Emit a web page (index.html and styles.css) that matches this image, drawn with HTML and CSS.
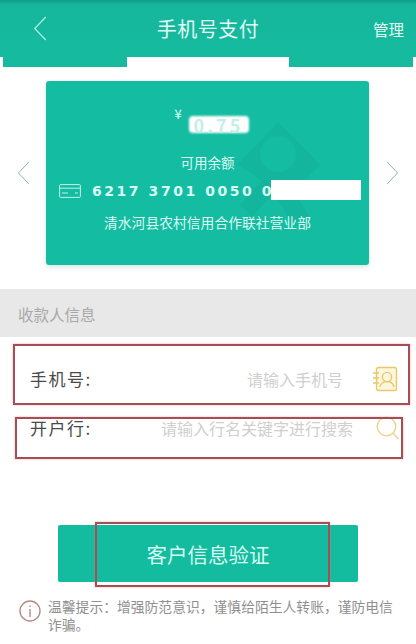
FILE: index.html
```html
<!DOCTYPE html>
<html lang="zh">
<head>
<meta charset="utf-8">
<title>手机号支付</title>
<link rel="stylesheet" href="styles.css">
</head>
<body>
<div class="page">
  <header class="header">
    <div class="bar">
      <svg class="back" viewBox="0 0 14 26"><path d="M13 1 1.5 13 13 25"/></svg>
      <h1 class="title">手机号支付</h1>
      <span class="manage">管理</span>
    </div>
    <div class="tabs"><span class="tab-side"></span><span class="tab-mid"></span><span class="tab-side"></span></div>
  </header>

  <section class="carousel">
    <svg class="arrow" viewBox="0 0 14 26"><path d="M13 1 1.5 13 13 25"/></svg>
    <div class="card">
      <svg class="watermark" viewBox="0 0 110 110"><path d="M55 0 100 45 72 73 88 100 70 108 50 75 28 100 15 88 38 62 12 45Z"/><circle class="wm-hole" cx="55" cy="34" r="19"/></svg>
      <div class="balance"><span class="yen">¥</span><span class="amount"><i class="amount-mask"></i><span class="amount-text">0.75</span></span></div>
      <div class="avail">可用余额</div>
      <div class="number">
        <svg class="card-icon" viewBox="0 0 22 14"><rect x=".6" y=".6" width="20.8" height="12.8" rx="1"/><path d="M.6 4.2h20.8M3 9h6M16 9h3"/></svg>
        <span class="digits">6217 3701 0050 0</span>
        <i class="number-mask"></i>
      </div>
      <div class="bank">清水河县农村信用合作联社营业部</div>
    </div>
    <svg class="arrow" viewBox="0 0 14 26"><path d="M1 1 12.5 13 1 25"/></svg>
  </section>

  <div class="band">收款人信息</div>

  <div class="row row-phone">
    <span class="label">手机号:</span>
    <span class="hint hint-phone">请输入手机号</span>
    <svg class="icon-contact" viewBox="0 0 25 26"><rect class="contact-card" x="3.500" y="1.500" width="20" height="23" rx="2"/><circle cx="14" cy="11" r="4.600"/><path d="M6.800 21c1-3.600 3.600-5.400 7.200-5.400s6.200 1.800 7.200 5.400M0 7h6M0 12h6M0 17h6"/></svg>
  </div>
  <div class="row row-bank">
    <span class="label">开户行:</span>
    <span class="hint hint-bank">请输入行名关键字进行搜索</span>
    <svg class="icon-search" viewBox="0 0 23 24"><circle cx="10.500" cy="10.500" r="9.300"/><path d="m17 17 5.500 6"/></svg>
  </div>

  <button class="verify" type="button">客户信息验证</button>

  <div class="tip">
    <svg class="tip-icon" viewBox="0 0 22 22"><circle cx="11" cy="11" r="10"/><path d="M11 9v8M11 5.500v1.500"/></svg>
    <p class="tip-text">温馨提示：增强防范意识，谨慎给陌生人转账，谨防电信诈骗。</p>
  </div>

  <i class="mark mark-phone"></i>
  <i class="mark mark-bank"></i>
  <i class="mark mark-verify"></i>
</div>
</body>
</html>
```

FILE: styles.css
```css
* { box-sizing: border-box; }
html, body { margin: 0; padding: 0; background: #fff; }
body { font-family: "Noto Sans CJK SC", "Noto Sans", sans-serif; }
.page { position: relative; width: 416px; height: 644px; overflow: hidden; background: #fff; }

.bar {
  position: relative; height: 57px; display: flex; align-items: center; justify-content: center;
  background: linear-gradient(#129c88 0, #16b69c 5px, #16bb9f 100%);
}
.back { position: absolute; left: 33px; top: 16px; width: 14px; height: 25px; fill: none; stroke: #a8f2e6; stroke-width: 1.300; }
.title { margin: 0; font-size: 20px; line-height: 28px; font-weight: 400; letter-spacing: .5px; color: #e2fbf6; }
.manage { position: absolute; left: 373px; top: 18px; font-size: 15.500px; line-height: 22px; color: #e6f8f4; }
.tabs { display: flex; height: 10px; margin: 0 3px; }
.tab-side { flex: 1; background: #16bb9f; }
.tab-mid { width: 162px; background: #fff; }

.carousel { display: grid; grid-template-columns: 46px 323px 47px; align-items: center; justify-items: center; margin-top: 14px; height: 184px; }
.arrow { width: 13px; height: 26px; fill: none; stroke: #7fb0a8; stroke-width: 1; }
.card {
  position: relative; width: 323px; height: 184px; border-radius: 3px; background: #14bda2; overflow: hidden;
  display: flex; flex-direction: column; align-items: center; box-shadow: 0 2px 5px rgba(20, 120, 100, .18);
}
.watermark { position: absolute; left: 180px; top: 41px; width: 104px; height: 104px; fill: #12ac94; opacity: .4; }
.wm-hole { fill: #14bda2; }
.balance { position: relative; display: flex; height: 54px; padding-top: 24px; margin-left: 8px; color: #e2fbf6; }
.yen { font-size: 13px; line-height: 18px; margin-right: 7px; }
.amount { position: relative; display: block; font-size: 18px; line-height: 22px; margin-top: 9px; width: 60px; height: 22px; font-weight: 700; }
.amount-mask { position: absolute; left: 0; top: 2px; width: 60px; height: 17px; background: #fff; border-radius: 4px; filter: blur(1px); }
.amount-text { position: relative; display: block; padding-left: 5px; letter-spacing: 3px; color: #c6eee6; }
.avail { position: relative; margin-top: 17px; font-size: 13.500px; line-height: 20px; color: #dff8f3; }
.number { position: relative; align-self: stretch; display: flex; align-items: center; height: 22px; margin-top: 8px; padding-left: 13px; }
.card-icon { width: 22px; height: 14px; fill: none; stroke: #d5f7f0; stroke-width: .9; flex: none; }
.digits { margin-left: 11px; font-family: "DejaVu Sans", sans-serif; font-size: 14px; font-weight: 700; letter-spacing: 2.550px; color: #d9faf4; white-space: nowrap; }
.number-mask { position: absolute; left: 225px; top: 0; width: 90px; height: 20px; background: #fff; }
.bank { position: relative; margin-top: 10px; font-size: 13.800px; line-height: 20px; color: #dff8f3; }

.band { margin-top: 24px; height: 48px; padding-left: 18px; background: #e8e8e8; font-size: 15.500px; line-height: 50px; color: #a9a9a9; }

.row { display: flex; align-items: center; position: relative; }
.row-phone { height: 79px; padding: 4px 18px 0 30px; }
.row-bank { height: 24px; padding: 0 17px 0 30px; }
.label { font-size: 17px; line-height: 24px; letter-spacing: 1.500px; color: #4a4a4a; }
.hint { margin-left: auto; font-size: 16px; line-height: 22px; color: #cfcfcf; white-space: nowrap; }
.hint-phone { margin-right: 30px; }
.hint-bank { margin-right: 23px; }
.icon-contact { width: 25px; height: 26px; flex: none; fill: none; stroke: #e8c86a; stroke-width: 1.400; }
.contact-card { fill: #fbf7df; }
.icon-search { width: 23px; height: 24px; flex: none; fill: none; stroke: #ecd491; stroke-width: 1.500; }

.verify {
  display: block; width: 300px; height: 57px; margin: 85px 0 0 58px; padding: 0; border: 0; border-radius: 2px;
  background: #13bc9e; color: #d8fbf4; font: 400 20.500px/28px "Noto Sans CJK SC", sans-serif;
}

.tip { display: flex; gap: 7px; margin: 15px 23px 0 19px; }
.tip-icon { width: 22px; height: 22px; flex: none; margin-top: 3px; fill: none; stroke: #b58d84; stroke-width: 1.400; }
.tip-text { margin: 0; font-size: 13.800px; line-height: 18px; color: #8f8f8f; }

.mark { position: absolute; display: block; border: 2px solid #a44f58; box-shadow: 0 0 2px rgba(230, 140, 140, .7); }
.mark-phone { left: 13px; top: 344px; width: 397px; height: 61px; }
.mark-bank { left: 15px; top: 417px; width: 388px; height: 42px; }
.mark-verify { left: 95px; top: 522px; width: 235px; height: 65px; }
```
